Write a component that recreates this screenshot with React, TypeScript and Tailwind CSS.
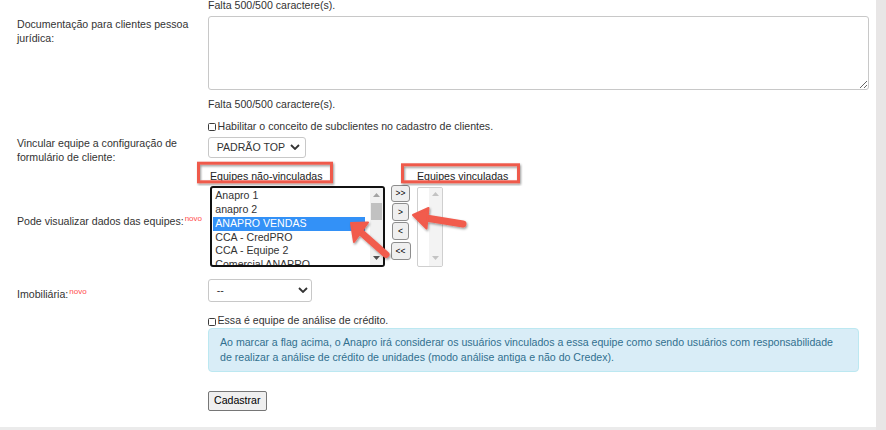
import type { ReactNode } from 'react';

const TEAMS = ['Anapro 1', 'anapro 2', 'ANAPRO VENDAS', 'CCA - CredPRO', 'CCA - Equipe 2', 'Comercial ANAPRO'];

function Label({ children, className = '' }: { children?: ReactNode; className?: string }) {
    return <div className={`w-[208px] shrink-0 pl-[17px] ${className}`}>{children}</div>;
}

function Novo() {
    return <span className="relative -top-[4px] ml-[1px] text-[8px] leading-none text-[#ff4c4c]">novo</span>;
}

function Check() {
    return (
        <span className="inline-block w-[8px] h-[8px] mr-[1.5px] border border-[#3b3b3b] rounded-[1.5px] bg-white relative top-[1.5px]" />
    );
}

function Chevron() {
    return (
        <svg width="10" height="6" viewBox="0 0 10 6" className="shrink-0">
            <path d="M1 1 L5 5 L9 1" fill="none" stroke="#333" strokeWidth="1.8" />
        </svg>
    );
}

function Tri({ up, color }: { up?: boolean; color: string }) {
    return (
        <svg width="7" height="4" viewBox="0 0 7 4">
            <path d={up ? 'M0 4 L3.5 0 L7 4 Z' : 'M0 0 L7 0 L3.5 4 Z'} fill={color} />
        </svg>
    );
}

function MoveButton({ label, className }: { label: string; className: string }) {
    return (
        <div
            className={`flex items-center justify-center border border-[#8d8d8d] rounded-[3px] bg-[#efefef] text-[8.5px] leading-none text-black ${className}`}
        >
            {label}
        </div>
    );
}

export default function App() {
    return (
        <div className="w-[886px] h-[430px] bg-[#e8e6e6] overflow-hidden font-['Liberation_Sans',Arial,sans-serif] text-[10.6px] leading-[14.5px] text-[#333]">
            <div className="relative w-[876px] h-[427px] bg-white overflow-hidden flex flex-col">
                {/* counter of the field above */}
                <div className="flex -mt-[1.6px]">
                    <Label />
                    <div>Falta 500/500 caractere(s).</div>
                </div>

                <div className="flex mt-[3.1px]">
                    <Label className="pt-[0.7px]">
                        Documentação para clientes pessoa
                        <br />
                        jurídica:
                    </Label>
                    <div className="flex flex-col">
                        <textarea className="block w-[661px] h-[74px] border border-[#c8c8c8] rounded-[3px] bg-white" />
                        <div className="mt-[6.7px]">Falta 500/500 caractere(s).</div>
                    </div>
                </div>

                <div className="flex mt-[7.8px]">
                    <Label />
                    <div>
                        <Check />
                        Habilitar o conceito de subclientes no cadastro de clientes.
                    </div>
                </div>

                <div className="flex mt-[3.2px]">
                    <Label className="-mt-[1px]">
                        Vincular equipe a configuração de
                        <br />
                        formulário de cliente:
                    </Label>
                    <div className="flex items-center justify-between w-[98px] h-[21.6px] pl-[7.7px] pr-[5px] border border-[#c8c8c8] rounded-[3px] bg-white">
                        <span>PADRÃO TOP</span>
                        <Chevron />
                    </div>
                </div>

                {/* team lists */}
                <div className="flex mt-[4.7px]">
                    <Label className="pt-[44.5px] whitespace-nowrap">
                        Pode visualizar dados das equipes:
                        <Novo />
                    </Label>
                    <div className="ml-[2px] flex flex-col">
                        <div className="flex text-[#222]">
                            <div className="w-[207px]">Equipes não-vinculadas</div>
                            <div className="whitespace-nowrap">Equipes vinculadas</div>
                        </div>
                        <div className="flex items-start mt-[2.1px]">
                            <div className="flex w-[175px] h-[80.7px] border-2 border-[#111] rounded-[3px] bg-white overflow-hidden">
                                <div className="flex-1 pl-[1.3px] pr-[5px] mt-[1.5px] leading-[13.75px]">
                                    {TEAMS.map((t) => (
                                        <div
                                            key={t}
                                            className={
                                                t === 'ANAPRO VENDAS'
                                                    ? 'h-[13.75px] pl-[2px] bg-[#3391f7] text-white whitespace-nowrap'
                                                    : 'h-[13.75px] pl-[2px] text-[#333] whitespace-nowrap'
                                            }
                                        >
                                            {t}
                                        </div>
                                    ))}
                                </div>
                                <div className="w-[13px] bg-[#f1f1f1] flex flex-col items-center">
                                    <div className="mt-[5px]">
                                        <Tri up color="#a3a3a3" />
                                    </div>
                                    <div className="mt-[6px] w-[11px] h-[17px] bg-[#c1c1c1]" />
                                    <div className="mt-auto mb-[5px]">
                                        <Tri color="#505050" />
                                    </div>
                                </div>
                            </div>

                            <div className="ml-[5px] -mt-[1px] w-[21px] flex flex-col items-center">
                                <MoveButton label=">>" className="w-[19px] h-[17px]" />
                                <MoveButton label=">" className="mt-[1px] w-[17px] h-[18px]" />
                                <MoveButton label="<" className="mt-[1px] w-[17px] h-[18px]" />
                                <MoveButton label="<<" className="mt-[2px] w-[20px] h-[18px]" />
                            </div>

                            <div className="ml-[6px] mt-[1px] flex justify-end w-[26px] h-[80px] border border-[#cfcfcf] rounded-[2px] bg-white overflow-hidden">
                                <div className="w-[13px] bg-[#f3f3f3] flex flex-col items-center">
                                    <div className="mt-[4px]">
                                        <Tri up color="#c3c3c3" />
                                    </div>
                                    <div className="mt-auto mb-[6px]">
                                        <Tri color="#c3c3c3" />
                                    </div>
                                </div>
                            </div>
                        </div>
                    </div>
                </div>

                <div className="flex mt-[12.3px]">
                    <Label className="pt-[7.4px]">
                        Imobiliária:
                        <Novo />
                    </Label>
                    <div className="flex items-center justify-between w-[104px] h-[22.4px] pl-[7.7px] pr-[3px] border border-[#c8c8c8] rounded-[3px] bg-white">
                        <span>--</span>
                        <Chevron />
                    </div>
                </div>

                <div className="flex mt-[11.7px]">
                    <Label />
                    <div className="flex flex-col">
                        <div>
                            <Check />
                            Essa é equipe de análise de crédito.
                        </div>
                        <div className="mt-[0.4px] w-[650.6px] h-[43.4px] px-[11px] py-[6px] border border-[#bce8f1] rounded-[4px] bg-[#d9edf7] text-[#31708f]">
                            Ao marcar a flag acima, o Anapro irá considerar os usuários vinculados a essa equipe como sendo usuários com responsabilidade
                            <br />
                            de realizar a análise de crédito de unidades (modo análise antiga e não do Credex).
                        </div>
                    </div>
                </div>

                <div className="flex mt-[19.3px]">
                    <Label />
                    <button className="h-[19.7px] px-[5px] border border-[#767676] rounded-[2px] bg-[#efefef] text-black leading-none">
                        Cadastrar
                    </button>
                </div>

                {/* red annotations drawn over the form */}
                <svg className="absolute inset-0 pointer-events-none" width="876" height="427">
                    <defs>
                        <filter id="sh" x="-20%" y="-20%" width="140%" height="140%">
                            <feDropShadow dx="1" dy="1.5" stdDeviation="0.8" floodColor="#000" floodOpacity="0.4" />
                        </filter>
                    </defs>
                    <g filter="url(#sh)">
                        <rect x="198.5" y="163.2" width="133" height="18.6" fill="none" stroke="#ef5a4c" strokeWidth="3" />
                        <rect x="402.5" y="164.8" width="116" height="17" fill="none" stroke="#ef5a4c" strokeWidth="3" />
                    </g>
                    <g filter="url(#sh)" fill="#f15b4d" stroke="#f15b4d" strokeLinejoin="round" strokeLinecap="round">
                        <path d="M463 224 L426 218" strokeWidth="7" fill="none" />
                        <path d="M413 215 L428.5 208 L426.5 228.5 Z" strokeWidth="2" />
                        <path d="M386 254.5 L360 231.5" strokeWidth="7" fill="none" />
                        <path d="M351 223 L368 222.5 L354 242 Z" strokeWidth="2" />
                    </g>
                </svg>
            </div>
            <div className="w-[876px] h-[3px] bg-[#ebebeb]" />
        </div>
    );
}
